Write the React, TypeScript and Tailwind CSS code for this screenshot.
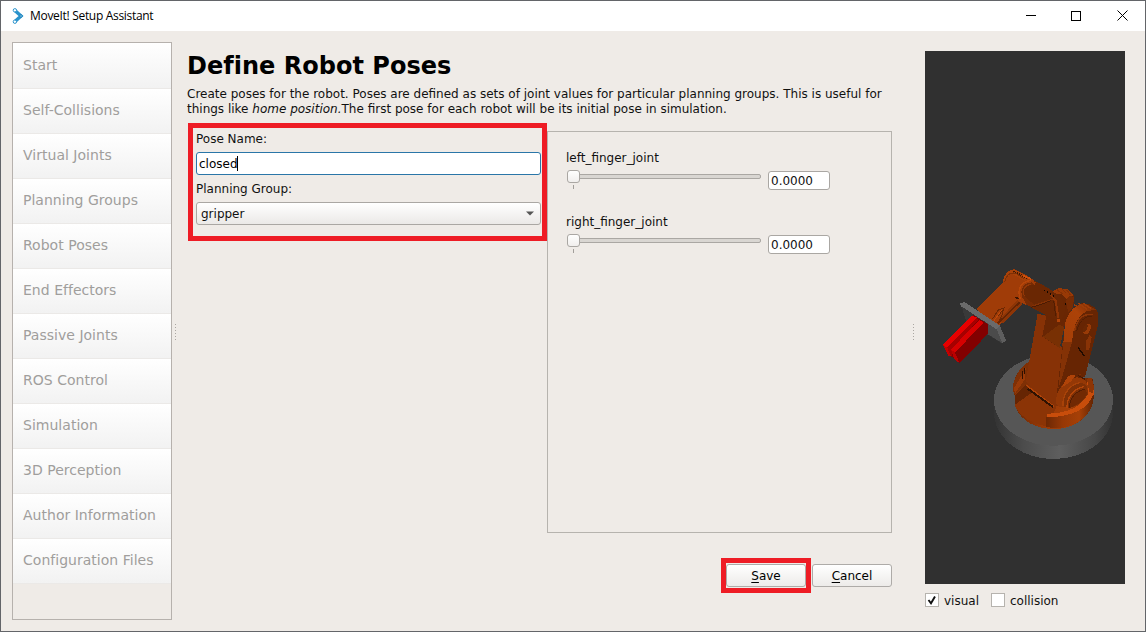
import type { ReactNode } from "react";

const steps = [
  "Start",
  "Self-Collisions",
  "Virtual Joints",
  "Planning Groups",
  "Robot Poses",
  "End Effectors",
  "Passive Joints",
  "ROS Control",
  "Simulation",
  "3D Perception",
  "Author Information",
  "Configuration Files",
];

function TitleBar() {
  return (
    <header className="flex h-[30px] shrink-0 items-center bg-white pl-[11px] pr-[17px]">
      <svg width="12" height="16" viewBox="0 0 12 16" className="shrink-0" fill="none">
        <path d="M3.500 3 9 8 3.500 13" stroke="#2a93cc" strokeWidth="3.400" />
        <circle cx="2.900" cy="2.300" r="1.700" fill="#fff" stroke="#2a93cc" />
        <circle cx="2.900" cy="13.700" r="1.700" fill="#fff" stroke="#2a93cc" />
        <circle cx="9" cy="8" r="1.300" fill="#9ad0ec" stroke="#1d83bd" />
      </svg>
      <span className="ml-[6px] whitespace-nowrap font-['Open_Sans','Noto_Sans',sans-serif] text-[12px] leading-[16px] tracking-[-0.31px] text-black">
        MoveIt! Setup Assistant
      </span>
      <div className="ml-auto flex items-center">
        <svg width="10" height="11" viewBox="0 0 10 11" shapeRendering="crispEdges">
          <path d="M0 4.500H10" stroke="#000" />
        </svg>
        <svg width="10" height="10" viewBox="0 0 10 10" shapeRendering="crispEdges" className="ml-[35px]">
          <rect x="0.500" y="0.500" width="9" height="9" fill="none" stroke="#000" />
        </svg>
        <svg width="11" height="11" viewBox="0 0 11 11" className="mb-px ml-[36px]">
          <path d="M0.500 0.500 10.500 10.500M10.500 0.500 0.500 10.500" stroke="#000" />
        </svg>
      </div>
    </header>
  );
}

function Splitter() {
  return (
    <div className="flex flex-col gap-[2px]">
      {[0, 1, 2, 3, 4, 5].map((i) => (
        <span key={i} className="size-px bg-[#aaa6a1]" />
      ))}
    </div>
  );
}

function Joint({ name }: { name: string }) {
  return (
    <div className="h-[64px]">
      <div className="leading-[14px]">{name}</div>
      <div className="flex items-start pt-[5px]">
        <svg width="196" height="20" viewBox="0 0 196 20" className="shrink-0">
          <defs>
            <linearGradient id="knob" x1="0" y1="0" x2="0" y2="1">
              <stop offset="0" stopColor="#fff" />
              <stop offset="1" stopColor="#f0eeec" />
            </linearGradient>
          </defs>
          <rect x="3.500" y="4.500" width="191" height="4" rx="1.500" fill="#d9d6d2" stroke="#aaa7a3" />
          <rect x="1.500" y="0.500" width="12" height="12" rx="2.500" fill="url(#knob)" stroke="#aaa7a3" />
          <path d="M7.500 15V19" stroke="#a19e9a" />
        </svg>
        <div className="ml-[6px] mt-px h-[19px] w-[62px] rounded-[3px] border border-[#aaa7a3] bg-white pl-[2px] leading-[18px]">
          0.0000
        </div>
      </div>
    </div>
  );
}

function Button({ children }: { children: ReactNode }) {
  return (
    <button className="block h-[23px] w-[80px] rounded-[3px] border border-[#aeaba8] bg-linear-to-b from-white to-[#edebe9] pt-px text-[12px] leading-[20px] text-black">
      {children}
    </button>
  );
}

function RobotView() {
  return (
    <svg width="200" height="533" viewBox="-30 -627 600 1599" className="block bg-[#303030]" shapeRendering="crispEdges" fill="none">
      <defs>
        <linearGradient id="pedestal" x1="0" x2="1">
          <stop offset="0" stopColor="#333" />
          <stop offset="0.25" stopColor="#4c4c4c" />
          <stop offset="0.550" stopColor="#5e5e5e" />
          <stop offset="0.850" stopColor="#474747" />
          <stop offset="1" stopColor="#333" />
        </linearGradient>
        <linearGradient id="turret" x1="0" x2="1">
          <stop offset="0" stopColor="#6d2804" />
          <stop offset="0.350" stopColor="#963806" />
          <stop offset="0.700" stopColor="#a64007" />
          <stop offset="1" stopColor="#652503" />
        </linearGradient>
        <linearGradient id="cap" x1="0" y1="1" x2="1" y2="0">
          <stop offset="0" stopColor="#a33e07" />
          <stop offset="0.600" stopColor="#ac4208" />
          <stop offset="1" stopColor="#6f2904" />
        </linearGradient>
      </defs>

      {/* pedestal */}
      <path d="M177 420V468C184 540 262 597 356 597S528 540 534 468V420Z" fill="url(#pedestal)" />
      <ellipse cx="355.500" cy="420" rx="178.500" ry="137" fill="#565656" />

      {/* rotating base */}
      <path d="M235 375C238 345 262 315 285 303L450 355 472 356 477 380V410C472 470 420 507 357 507S245 475 239 425V405L235 395Z" fill="url(#turret)" />
      <path d="M235 372C242 342 262 315 283 304L275 350 272 375 241 408 235 395Z" fill="#7f3005" />
      <path d="M237 385 258 350 272 322 270 358 240 400Z" fill="#9a3a07" />
      <path d="M261 334V356M268 324V342" stroke="#2d1001" strokeWidth="3" />
      <path d="M239 405 274 372 365 440 335 500C285 490 243 462 239 432Z" fill="#8b3406" />
      <path d="M239 408 273 374 292 397 240 434Z" fill="#662503" />
      <path d="M334 461C400 462 447 436 457 398L455 358 470 354 477 382V402C468 442 420 470 338 474Z" fill="#c84d0b" />
      <path d="M456 356 470 354 477 382 474 400 462 395Z" fill="#8d3505" />
      <path d="M334 472C410 472 463 445 475 402V425C464 468 424 497 382 504L334 502Z" fill="url(#turret)" />

      {/* lower arm */}
      <path d="M308 160 332 170 350 240 380 262 392 200 412 150 440 140 470 190 440 340 375 435 352 440 272 365Z" fill="#873206" />
      <path d="M388 210 440 145 488 160 490 190 450 350 400 370 362 432Z" fill="#672503" />
      <path d="M274 376 358 440" stroke="#b04308" strokeWidth="4" />
      <path d="M278 386 354 441" stroke="#2f1202" strokeWidth="6" />

      {/* shoulder joint */}
      <path d="M362 430C362 390 388 360 425 352 450 352 462 370 460 395 440 430 410 445 375 442Z" fill="#943806" />
      <path d="M384 438C382 405 402 374 432 368 456 368 460 385 458 405 440 432 415 446 392 442Z" fill="#7f3005" />
      <path d="M384 438C382 405 402 374 435 368" stroke="#a84208" strokeWidth="4" />
      <path d="M396 443C396 412 414 386 446 380" stroke="#b24509" strokeWidth="4" />
      <path d="M403 444C403 415 422 392 450 388L457 400C448 422 425 438 403 444Z" fill="#712903" />
      <path d="M403 444C403 415 422 392 450 388" stroke="#541d02" strokeWidth="3" />
      <path d="M380 383C395 350 420 315 443 290L448 293C441 315 425 345 407 365Z" fill="#b04308" />
      <path d="M420 340 444 302 438 345Z" fill="#7b2e04" />
      <path d="M421 346 446 292M430 347 450 358" stroke="#4a1801" strokeWidth="3" />

      {/* elbow yoke */}
      <path d="M330 165 352 105 370 86 402 90 417 108 416 132 408 155 388 200 374 264 322 230Z" fill="#692603" />
      <path d="M352 95 370 84 398 88 415 104 404 122 394 118 381 103 360 102Z" fill="#983906" />
      <path d="M366 88 382 102M380 86 394 100M394 89 406 104" stroke="#843105" strokeWidth="4" />
      <path d="M392 122 405 106 417 112 414 142 400 158Z" fill="#772c04" />
      <path d="M324 230 372 194 388 202 374 264Z" fill="#783004" />
      <path d="M308 160 334 168 322 228 306 240Z" fill="#873206" />

      {/* side plate of the lower arm */}
      <path d="M388 238C388 184 402 142 440 130 474 128 490 150 490 168L482 215 456 305 441 340 388 350Z" fill="#672503" />
      <path d="M385 248 390 190C400 150 426 130 452 131L486 151C450 144 424 170 415 214L410 252Z" fill="url(#cap)" />
      <path d="M385 246H411L400 285 382 350 370 385Z" fill="#843206" />
      <path d="M418 134 444 153M430 130 456 148M444 129 468 146" stroke="#9f3c08" strokeWidth="4" />
      <path d="M419 212C425 182 440 160 473 163" stroke="#8d3506" strokeWidth="4" />
      <path d="M425 214C431 188 446 169 470 168" stroke="#4b1b02" strokeWidth="2" />
      <ellipse cx="456" cy="207" rx="10" ry="17" transform="rotate(25 456 207)" fill="#983a07" />
      <ellipse cx="451" cy="205" rx="5" ry="13" transform="rotate(25 451 205)" fill="#6a2703" />
      <path d="M452 268 454 242 464 224 470 232 462 272Z" fill="#893306" />
      <path d="M429 262 448 288" stroke="#1f0b01" strokeWidth="4" />

      {/* forearm */}
      <path d="M124 148 203 68C206 40 225 25 240 28L285 52 302 66 300 145 262 130 190 198 160 182Z" fill="#a03c08" />
      <path d="M262 124 288 66 302 64 340 84 378 112 392 150 376 184 330 163 290 143Z" fill="#6a2703" />
      <path d="M203 67C205 42 222 28 240 29L285 55 268 62 228 40Z" fill="#a94108" />
      <path d="M209 66C214 45 226 36 243 40L266 56" stroke="#7e3005" strokeWidth="3" />
      <path d="M236 33 282 58" stroke="#421801" strokeWidth="5" strokeDasharray="3 3" />
      <path d="M264 47 288 57" stroke="#d0500c" strokeWidth="5" />
      <path d="M246 88 256 130 196 192 160 182Z" fill="#a03c08" />
      <path d="M204 192 262 132 248 120 192 178Z" fill="#8d3506" />
      <path d="M188 190 254 127" stroke="#652403" strokeWidth="5" />
      <path d="M172 178 190 150 207 144 201 164 190 188M180 178 204 150" stroke="#6c2803" strokeWidth="3" />
      <path d="M177 182 199 151" stroke="#bd490a" strokeWidth="3" />
      <path d="M240 112 252 116" stroke="#3e1501" strokeWidth="4" />
      <path d="M254 119C242 88 258 60 288 60L302 66 284 132 264 130Z" fill="#a03c08" />
      <path d="M262 112C252 88 268 66 291 67L304 80 296 143 275 135Z" fill="#752b04" />
      <path d="M268 109C259 89 272 71 296 74L328 88 300 136Z" fill="#6a2703" />
      <path d="M256 117C245 88 260 62 288 62" stroke="#b64609" strokeWidth="4" />
      <path d="M268 109C260 90 270 75 289 73" stroke="#933706" strokeWidth="3" />
      <path d="M290 138C315 132 335 122 354 118" stroke="#833105" strokeWidth="4" />
      <path d="M288 142C312 138 330 127 348 122" stroke="#3d1501" strokeWidth="2" />
      <path d="M347 105 362 121 370 174" stroke="#8f3506" strokeWidth="6" />
      <path d="M356 122 362 168" stroke="#521d02" strokeWidth="3" />
      <circle cx="370" cy="181" r="5" fill="#b04308" />
      <path d="M327 91h4M336 96h4M345 102h4M353 108h4M390 132h4" stroke="#100600" strokeWidth="4" />

      {/* mounting plate */}
      <path d="M80 140 188 205 200 250 176 235 130 208 92 180Z" fill="#393939" />
      <path d="M156 187 190 207 203 250 174 232 158 222Z" fill="#4b4b4b" />
      <path d="M76 130 88 126 194 196 185 208 77 138Z" fill="#6a6a6a" />
      <path d="M194 196 213 241 202 250 185 208Z" fill="#5e5e5e" />

      {/* gripper fingers */}
      <path d="M24 254 116 166 158 192 160 220 74 310 52 290 40 288Z" fill="#820000" />
      <path d="M24 254 112 167 126 173 36 264Z" fill="#e60000" />
      <path d="M36 264 126 173 130 180 49 270 52 290 40 286Z" fill="#a60000" />
      <path d="M48 268 133 180 145 188 60 278Z" fill="#d60000" />
      <path d="M24 254 37 264 49 290 40 288Z" fill="#c40000" />
      <path d="M48 268 60 278 74 310 58 297Z" fill="#ba0000" />
    </svg>
  );
}

export default function App() {
  return (
    <div className="flex h-[632px] w-[1146px] flex-col overflow-hidden border border-[#636569] bg-[#efebe7] font-['DejaVu_Sans',sans-serif] text-[12px] text-[#111]">
      <TitleBar />
      <div className="flex min-h-0 flex-1 pl-[11px]">
        <nav className="mt-[11px] h-[578px] w-[160px] shrink-0 border border-[#b6b1ad]">
          {steps.map((step) => (
            <div
              key={step}
              className="h-[45px] border-b border-[#ebe9e7] bg-linear-to-b from-white to-[#f2f2f2] pl-[10px] text-[14px] leading-[42px] tracking-[0.02px] text-[#a09e9c] first:h-[46px] first:leading-[44px]"
            >
              {step}
            </div>
          ))}
        </nav>

        <div className="flex w-[15px] shrink-0 justify-center pt-[293px] pr-[8px]">
          <Splitter />
        </div>

        <main className="w-[705px] shrink-0">
          <h1 className="pt-[21px] text-[24px] font-bold leading-[29px] tracking-[0.02px] text-black">Define Robot Poses</h1>
          <p className="mt-[6px] whitespace-nowrap leading-[15px]">
            Create poses for the robot. Poses are defined as sets of joint values for particular planning groups. This is useful for
            <br />
            things like <em>home position.</em>The first pose for each robot will be its initial pose in simulation.
          </p>
          <div className="mt-[6px] flex items-start pl-px">
            <section className="h-[118px] w-[359px] shrink-0 border-[5px] border-[#ee1c25] pl-[3px]">
              <div className="pt-[4px] leading-[15px]">Pose Name:</div>
              <div className="mt-[5px] flex h-[23px] w-[345px] items-center rounded-[3px] border border-[#2a76a8] bg-white pl-[2px] text-black">
                closed
                <span className="-ml-px h-[15px] w-px bg-black" />
              </div>
              <div className="mt-[7px] leading-[15px]">Planning Group:</div>
              <div className="mt-[5px] flex h-[23px] w-[345px] items-center justify-between rounded-[3px] border border-[#aaa7a3] bg-linear-to-b from-white to-[#ebe9e7] pl-[4px] pr-[6px]">
                gripper
                <svg width="8" height="5" viewBox="0 0 8 5">
                  <path d="M0 0.500H8L4 4.500Z" fill="#555" />
                </svg>
              </div>
            </section>
            <section className="mt-[8px] h-[402px] w-[345px] shrink-0 border border-[#b6b3ae] pl-[18px] pt-[19px]">
              <Joint name="left_finger_joint" />
              <Joint name="right_finger_joint" />
            </section>
          </div>
          <div className="mt-[25px] flex items-start justify-end">
            <div className="h-[35px] w-[90px] border-[5px] border-[#ee1c25] pt-px">
              <Button>
                <u className="underline-offset-2">S</u>ave
              </Button>
            </div>
            <div className="ml-px pt-[6px]">
              <Button>
                <u className="underline-offset-2">C</u>ancel
              </Button>
            </div>
          </div>
        </main>

        <div className="flex w-[33px] shrink-0 justify-center pt-[293px] pl-[10px]">
          <Splitter />
        </div>

        <aside className="pt-[20px]">
          <RobotView />
          <div className="mt-[9px] flex h-[16px] items-start leading-[16px]">
            <span className="flex size-[14px] items-center justify-center border border-[#b6b3ae] bg-white">
              <svg width="10" height="10" viewBox="0 0 10 10">
                <path d="M1.500 5 4 8.300 8 1.500" fill="none" stroke="#111" strokeWidth="1.900" />
              </svg>
            </span>
            <span className="ml-[5px] w-[47px]">visual</span>
            <span className="size-[14px] border border-[#b6b3ae] bg-white" />
            <span className="ml-[5px]">collision</span>
          </div>
        </aside>
      </div>
    </div>
  );
}
